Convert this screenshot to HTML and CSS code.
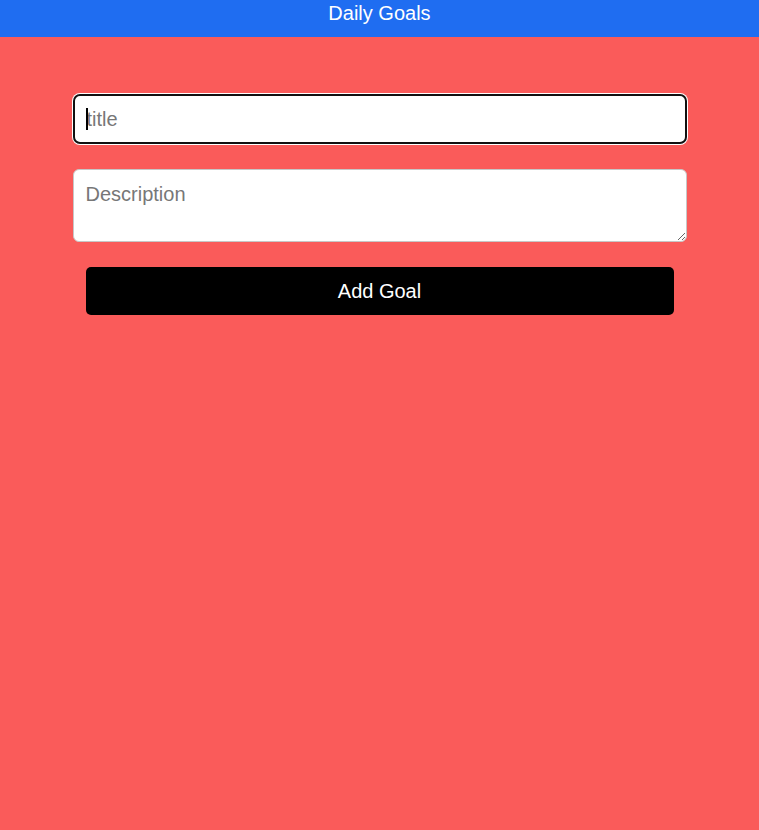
FILE: index.html
```html
<!DOCTYPE html>
<html lang="en">
<head>
<meta charset="utf-8">
<title>Daily Goals</title>
<link rel="stylesheet" href="styles.css">
</head>
<body>
<header class="topbar">Daily Goals</header>
<main class="page">
  <form class="goal-form">
    <div class="field-wrap">
      <input class="field field-title" type="text" placeholder="title">
      <span class="caret"></span>
    </div>
    <textarea class="field field-desc" placeholder="Description"></textarea>
    <button class="add-btn" type="button">Add Goal</button>
  </form>
</main>
</body>
</html>
```
FILE: styles.css
```css
* { box-sizing: border-box; }
html, body { height: 100%; }
body {
  margin: 0;
  background: #fa5b5a;
  font-family: "Liberation Sans", Arial, sans-serif;
}
.topbar {
  height: 37px;
  background: #1f6df1;
  color: #fff;
  font-size: 20px;
  line-height: 27px;
  text-align: center;
}
.page {
  padding-top: 57px;
}
.goal-form {
  width: 614px;
  margin: 0 auto;
  display: flex;
  flex-direction: column;
  gap: 25px;
}
.field-wrap { position: relative; }
.field {
  display: block;
  width: 100%;
  font-family: "Liberation Sans", Arial, sans-serif;
  font-size: 20px;
  color: #222;
  background: #fff;
  border: 1px solid #c7c7c7;
  border-radius: 6px;
  outline: none;
}
.field::placeholder { color: #777; }
.field-title {
  height: 50px;
  padding: 0 12px;
  border: 2px solid #111;
  border-radius: 7px;
  box-shadow: 0 0 0 1px #fff;
}
.caret {
  position: absolute;
  left: 13px;
  top: 14px;
  width: 2px;
  height: 22px;
  background: #000;
}
.field-desc {
  height: 73px;
  padding: 13px 12px 12px;
  resize: vertical;
}
.add-btn {
  margin: 0 13px;
  height: 48px;
  background: #000;
  color: #fff;
  border: none;
  border-radius: 5px;
  font-family: "Liberation Sans", Arial, sans-serif;
  font-size: 20px;
}
```
